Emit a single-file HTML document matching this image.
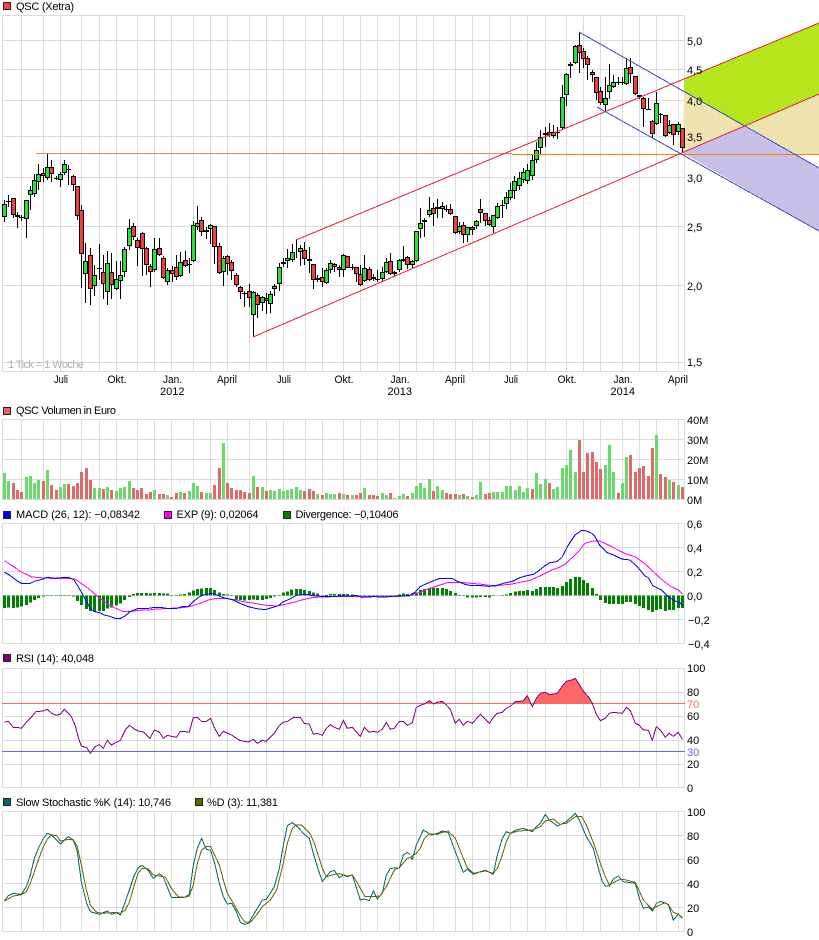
<!DOCTYPE html>
<html><head><meta charset="utf-8"><title>QSC (Xetra)</title>
<style>
html,body{margin:0;padding:0;background:#fff;width:819px;height:940px;overflow:hidden}
svg{display:block}
text{font-family:"Liberation Sans",sans-serif;font-size:11px;fill:#000}
</style></head><body>
<svg xmlns="http://www.w3.org/2000/svg" width="819" height="940" viewBox="0 0 819 940">
<g shape-rendering="crispEdges">
<rect width="819" height="940" fill="#fff"/>
<!-- vertical grid -->
<path fill="none" stroke="#dcdcdc" d="M2.5 15V931M21.5 15V931M43.5 15V931M60.5 15V931M81.5 15V931M99.5 15V931M116.5 15V931M137.5 15V931M154.5 15V931M171.5 15V931M193.5 15V931M210.5 15V931M227.5 15V931M249.5 15V931M266.5 15V931M283.5 15V931M305.5 15V931M322.5 15V931M343.5 15V931M360.5 15V931M377.5 15V931M399.5 15V931M416.5 15V931M433.5 15V931M455.5 15V931M472.5 15V931M489.5 15V931M510.5 15V931M527.5 15V931M545.5 15V931M566.5 15V931M583.5 15V931M600.5 15V931M622.5 15V931M639.5 15V931M656.5 15V931M678.5 15V931M684.5 15V931"/>
<rect x="0" y="372" width="700" height="47" fill="#fff"/>
<rect x="0" y="500" width="700" height="23" fill="#fff"/>
<rect x="0" y="644" width="700" height="24" fill="#fff"/>
<rect x="0" y="788" width="700" height="23" fill="#fff"/>
<!-- horizontal grid -->
<path fill="none" stroke="#dcdcdc" d="M2 15.5H685M2 40.5H685M2 69.5H685M2 100.5H685M2 136.5H685M2 177.5H685M2 226.5H685M2 285.5H685M2 362.5H685M2 371.5H685M2 419.5H685M2 439.5H685M2 459.5H685M2 479.5H685M2 499.5H685M2 523.5H685M2 547.5H685M2 571.5H685M2 595.5H685M2 619.5H685M2 643.5H685M2 668.5H685M2 692.5H685M2 716.5H685M2 740.5H685M2 764.5H685M2 787.5H685M2 811.5H685M2 835.5H685M2 859.5H685M2 883.5H685M2 907.5H685M2 931.5H685"/>
<!-- right fans -->
<polygon fill="#efe4b0" points="684,91 743,126 819,94 819,154 793,154 743,126 683,153"/>
<polygon fill="#c8bfe7" points="683,153 743,126 819,168 819,231"/>
<polygon fill="#b5e61d" points="684,79 819,23 819,94 743,126 684,91"/>
<!-- candle wicks -->
<path fill="none" stroke="#000" d="M4.5 200V222M8.5 195V207M13.5 198V218M17.5 212V228M21.5 215V221M26.5 200V238M30.5 186V210M34.5 174V197M38.5 164V190M43.5 168V182M47.5 154V180M51.5 160V182M56.5 176V180M60.5 172V187M64.5 160V175M68.5 165V185M73.5 175V191M77.5 186V220M81.5 205V288M85.5 243V303M90.5 248V305M94.5 265V296M99.5 244V280M103.5 255V299M107.5 251V305M111.5 253V299M116.5 261V290M120.5 261V299M124.5 247V277M129.5 219V250M133.5 223V240M137.5 238V266M142.5 232V276M146.5 247V275M150.5 264V287M154.5 238V272M159.5 238V256M163.5 256V279M167.5 268V285M172.5 266V282M176.5 255V280M180.5 252V277M185.5 251V267M189.5 258V273M193.5 221V262M197.5 206V230M201.5 217V236M206.5 227V239M210.5 224V244M214.5 226V264M219.5 243V274M223.5 256V286M227.5 255V275M231.5 260V280M236.5 273V287M240.5 286V299M244.5 291V307M249.5 284V307M253.5 291V337M257.5 293V318M262.5 296V311M266.5 293V314M270.5 291V313M274.5 284V296M279.5 263V291M283.5 258V267M287.5 249V268M292.5 244V262M296.5 240V258M300.5 245V266M304.5 242V265M309.5 247V273M313.5 264V289M317.5 275V282M322.5 268V287M326.5 268V284M330.5 260V273M334.5 263V272M339.5 265V277M343.5 254V277M347.5 256V268M352.5 264V270M356.5 267V282M360.5 265V286M364.5 255V282M369.5 267V281M373.5 274V281M377.5 270V282M382.5 267V281M386.5 258V273M390.5 253V275M394.5 271V276M399.5 259V272M403.5 246V262M407.5 256V269M412.5 260V268M416.5 231V262M420.5 208V238M424.5 218V237M429.5 197V217M433.5 203V226M437.5 199V218M442.5 202V218M446.5 205V212M450.5 204V215M455.5 216V234M459.5 222V234M463.5 222V243M467.5 227V242M472.5 226V235M476.5 220V229M480.5 199V223M485.5 213V226M489.5 217V226M493.5 215V233M497.5 203V219M502.5 200V218M506.5 192V209M510.5 183V200M514.5 176V199M519.5 172V190M523.5 168V183M527.5 164V184M532.5 155V180M536.5 142V163M540.5 130V155M545.5 127V147M549.5 123V137M553.5 125V138M557.5 127V139M562.5 85V130M566.5 73V106M570.5 62V78M575.5 45V64M579.5 32V73M583.5 48V68M587.5 56V80M592.5 70V82M596.5 77V100M600.5 87V105M605.5 77V112M609.5 64V99M613.5 75V88M618.5 77V85M622.5 77V85M626.5 58V85M630.5 58V83M635.5 76V95M639.5 95V99M643.5 97V127M648.5 98V110M652.5 120V138M656.5 92V125M660.5 113V123M665.5 115V137M669.5 120V134M673.5 124V145M678.5 122V135M682.5 128V153
M6 201.5h5M19 217.5h5M54 178.5h5M66 169.5h5M97 268.5h5M242 293.5h5M187 264.5h5M350 267.5h5M375 279.5h5M444 209.5h5M500 205.5h5M555 132.5h5M616 82.5h5M620 82.5h5M646 109.5h5M658 114.5h5"/>
<!-- green bodies -->
<path fill="#22e632" stroke="#000" d="M2.5 204.5h4V216.5h-4zM24.5 200.5h4V218.5h-4zM28.5 190.5h4V194.5h-4zM32.5 180.5h4V193.5h-4zM36.5 174.5h4V181.5h-4zM45.5 167.5h4V177.5h-4zM58.5 174.5h4V179.5h-4zM62.5 164.5h4V172.5h-4zM83.5 261.5h4V273.5h-4zM92.5 275.5h4V285.5h-4zM105.5 263.5h4V291.5h-4zM114.5 279.5h4V288.5h-4zM118.5 275.5h4V280.5h-4zM122.5 249.5h4V271.5h-4zM127.5 228.5h4V245.5h-4zM152.5 249.5h4V269.5h-4zM165.5 270.5h4V281.5h-4zM178.5 262.5h4V275.5h-4zM191.5 225.5h4V260.5h-4zM195.5 223.5h4V226.5h-4zM208.5 225.5h4V228.5h-4zM221.5 258.5h4V271.5h-4zM251.5 292.5h4V314.5h-4zM260.5 297.5h4V302.5h-4zM268.5 294.5h4V303.5h-4zM272.5 286.5h4V288.5h-4zM277.5 267.5h4V283.5h-4zM281.5 262.5h4V263.5h-4zM285.5 258.5h4V260.5h-4zM290.5 252.5h4V259.5h-4zM298.5 248.5h4V251.5h-4zM315.5 278.5h4V279.5h-4zM324.5 270.5h4V282.5h-4zM328.5 263.5h4V269.5h-4zM341.5 255.5h4V269.5h-4zM362.5 268.5h4V280.5h-4zM380.5 272.5h4V278.5h-4zM384.5 262.5h4V271.5h-4zM392.5 272.5h4V273.5h-4zM397.5 260.5h4V269.5h-4zM401.5 259.5h4V260.5h-4zM410.5 261.5h4V264.5h-4zM414.5 231.5h4V260.5h-4zM418.5 223.5h4V228.5h-4zM422.5 220.5h4V221.5h-4zM427.5 210.5h4V214.5h-4zM435.5 207.5h4V208.5h-4zM440.5 206.5h4V208.5h-4zM457.5 226.5h4V231.5h-4zM465.5 227.5h4V234.5h-4zM474.5 221.5h4V225.5h-4zM491.5 215.5h4V226.5h-4zM495.5 206.5h4V217.5h-4zM504.5 197.5h4V203.5h-4zM508.5 190.5h4V197.5h-4zM512.5 181.5h4V190.5h-4zM517.5 178.5h4V185.5h-4zM521.5 172.5h4V179.5h-4zM525.5 170.5h4V180.5h-4zM530.5 160.5h4V175.5h-4zM534.5 150.5h4V159.5h-4zM538.5 137.5h4V147.5h-4zM543.5 133.5h4V134.5h-4zM551.5 132.5h4V135.5h-4zM560.5 97.5h4V127.5h-4zM564.5 74.5h4V94.5h-4zM568.5 64.5h4V65.5h-4zM573.5 46.5h4V62.5h-4zM603.5 98.5h4V104.5h-4zM607.5 85.5h4V91.5h-4zM611.5 82.5h4V86.5h-4zM624.5 68.5h4V83.5h-4zM654.5 103.5h4V123.5h-4zM667.5 125.5h4V132.5h-4zM676.5 124.5h4V131.5h-4z"/>
<!-- red bodies -->
<path fill="#f63c3c" stroke="#000" d="M11.5 198.5h4V214.5h-4zM15.5 215.5h4V216.5h-4zM41.5 173.5h4V175.5h-4zM49.5 167.5h4V173.5h-4zM71.5 176.5h4V184.5h-4zM75.5 186.5h4V215.5h-4zM79.5 210.5h4V253.5h-4zM88.5 255.5h4V288.5h-4zM101.5 272.5h4V283.5h-4zM109.5 272.5h4V284.5h-4zM131.5 226.5h4V236.5h-4zM135.5 240.5h4V247.5h-4zM140.5 233.5h4V248.5h-4zM144.5 248.5h4V264.5h-4zM148.5 266.5h4V271.5h-4zM157.5 248.5h4V254.5h-4zM161.5 258.5h4V277.5h-4zM170.5 270.5h4V273.5h-4zM174.5 267.5h4V276.5h-4zM183.5 260.5h4V265.5h-4zM199.5 220.5h4V231.5h-4zM204.5 230.5h4V231.5h-4zM212.5 226.5h4V246.5h-4zM217.5 246.5h4V272.5h-4zM225.5 256.5h4V263.5h-4zM229.5 262.5h4V270.5h-4zM234.5 275.5h4V284.5h-4zM238.5 287.5h4V291.5h-4zM247.5 291.5h4V297.5h-4zM255.5 295.5h4V304.5h-4zM264.5 298.5h4V300.5h-4zM302.5 250.5h4V258.5h-4zM307.5 259.5h4V260.5h-4zM311.5 264.5h4V279.5h-4zM320.5 277.5h4V281.5h-4zM332.5 264.5h4V266.5h-4zM337.5 267.5h4V269.5h-4zM345.5 256.5h4V267.5h-4zM354.5 267.5h4V273.5h-4zM358.5 274.5h4V284.5h-4zM367.5 269.5h4V279.5h-4zM371.5 277.5h4V278.5h-4zM388.5 261.5h4V273.5h-4zM405.5 257.5h4V264.5h-4zM431.5 208.5h4V213.5h-4zM448.5 209.5h4V213.5h-4zM453.5 216.5h4V232.5h-4zM461.5 225.5h4V234.5h-4zM470.5 227.5h4V229.5h-4zM478.5 209.5h4V212.5h-4zM483.5 213.5h4V220.5h-4zM487.5 220.5h4V224.5h-4zM547.5 132.5h4V134.5h-4zM577.5 45.5h4V52.5h-4zM581.5 51.5h4V58.5h-4zM585.5 58.5h4V64.5h-4zM590.5 72.5h4V74.5h-4zM594.5 77.5h4V92.5h-4zM598.5 91.5h4V102.5h-4zM628.5 67.5h4V73.5h-4zM633.5 76.5h4V93.5h-4zM637.5 95.5h4V96.5h-4zM641.5 98.5h4V108.5h-4zM650.5 121.5h4V133.5h-4zM663.5 115.5h4V135.5h-4zM671.5 124.5h4V134.5h-4zM680.5 128.5h4V147.5h-4z"/>
<!-- overlay lines -->
<path fill="none" stroke="#e08a4c" d="M36 153.5H512"/>
<path fill="none" stroke="#ff8000" d="M512 154.5H819"/>
<path fill="none" stroke="#ee1c3c" d="M296 240L819 23M253 337L819 94"/>
<path fill="none" stroke="#3c4cc8" d="M579 32L819 168M597 107L819 231"/>
<!-- volume -->
<path fill="none" stroke="#6ad86a" stroke-width="3" d="M4.5 473V499M8.5 481V499M26.5 477V499M30.5 476V499M34.5 483V499M38.5 480V499M47.5 470V499M60.5 487V499M64.5 484V499M94.5 488V499M99.5 488V499M107.5 487V499M116.5 491V499M120.5 488V499M124.5 487V499M129.5 481V499M154.5 490V499M167.5 495V499M180.5 492V499M189.5 491V499M193.5 483V499M197.5 486V499M206.5 493V499M210.5 493V499M223.5 443V499M253.5 476V499M262.5 487V499M270.5 490V499M274.5 491V499M279.5 489V499M283.5 491V499M287.5 490V499M291.5 489V499M296.5 487V499M300.5 490V499M317.5 494V499M326.5 493V499M330.5 494V499M334.5 494V499M343.5 494V499M352.5 495V499M364.5 488V499M382.5 493V499M386.5 495V499M394.5 498V499M399.5 496V499M403.5 494V499M412.5 493V499M416.5 486V499M420.5 483V499M424.5 488V499M429.5 479V499M437.5 486V499M442.5 490V499M459.5 495V499M467.5 496V499M476.5 495V499M480.5 482V499M493.5 492V499M497.5 492V499M502.5 492V499M506.5 486V499M510.5 486V499M515.5 490V499M519.5 486V499M523.5 492V499M527.5 488V499M536.5 473V499M540.5 484V499M545.5 479V499M553.5 489V499M557.5 487V499M562.5 468V499M566.5 465V499M570.5 450V499M575.5 472V499M605.5 465V499M609.5 445V499M613.5 472V499M622.5 483V499M626.5 457V499M656.5 435V499M669.5 480V499M678.5 485V499"/>
<path fill="none" stroke="#e06a6a" stroke-width="3" d="M13.5 483V499M17.5 490V499M21.5 492V499M43.5 481V499M51.5 485V499M56.5 490V499M68.5 484V499M73.5 486V499M77.5 483V499M81.5 472V499M86.5 468V499M90.5 480V499M103.5 489V499M111.5 490V499M133.5 488V499M137.5 490V499M141.5 488V499M146.5 494V499M150.5 492V499M159.5 494V499M163.5 494V499M171.5 497V499M176.5 493V499M184.5 493V499M201.5 492V499M214.5 485V499M219.5 468V499M227.5 483V499M231.5 488V499M236.5 490V499M240.5 490V499M244.5 492V499M249.5 493V499M257.5 487V499M266.5 491V499M304.5 491V499M309.5 489V499M313.5 491V499M322.5 495V499M339.5 493V499M347.5 495V499M356.5 495V499M360.5 493V499M369.5 495V499M373.5 495V499M377.5 496V499M390.5 493V499M407.5 496V499M433.5 491V499M446.5 493V499M450.5 494V499M455.5 494V499M463.5 494V499M472.5 497V499M485.5 494V499M489.5 493V499M532.5 489V499M549.5 483V499M579.5 440V499M583.5 472V499M587.5 453V499M592.5 452V499M596.5 462V499M600.5 469V499M618.5 493V499M630.5 455V499M635.5 472V499M639.5 468V499M643.5 466V499M648.5 476V499M652.5 448V499M660.5 474V499M665.5 477V499M673.5 482V499M682.5 487V499"/>
<!-- MACD left -->
<g transform="translate(0,505) scale(.33333)" fill="none">
<path stroke="#008000" stroke-width="9" d="M13 271V309M25 271V307M40 271V309M52 271V307M64 271V305M79 271V300M91 271V293M103 271V285M115 271V279M130 271V274M142 271V273M154 271V273M169 271V273M181 271V273M193 271V273M205 271V273M220 271V274M232 271V288M245 271V300M259 271V312M271 271V318M283 271V320M298 271V318M310 271V318M322 271V310M334 271V308M349 271V302M361 271V295M373 271V285M388 271V276M400 267V271M412 264V271M424 264V271M439 264V271M451 265V271M463 264V271M478 264V271M490 266V271M502 266V271M514 270V272M529 270V272M541 268V271M553 267V271M568 263V271M580 257V271M592 252V271M604 250V271M619 249V271M631 249V271M643 255V271M658 263V271M670 267V271M682 269V271M694 270V272M709 271V283M721 271V285M733 271V287M748 271V285M760 271V284M772 271V285M787 271V285M799 271V282M811 271V279M823 271V274M838 270V272M850 262V271M862 260V271M874 254V271M889 252V271M901 252V271M913 255V271M928 258V271M940 262V271M952 266V271M967 270V272M979 270V273M991 267V271M1003 267V271M1018 267V271M1030 267V271M1042 267V271M1057 268V271M1069 270V272M1081 271V273M1093 271V273M1108 271V273M1120 271V273M1132 271V273M1147 271V273M1159 271V273M1171 271V273M1183 271V273M1198 268V271M1210 265V271M1222 267V271"/>
<polyline stroke="#ff00ff" stroke-width="3" points="13,167 30,178 45,188 60,199 75,206 95,216 120,218 150,220 200,220 225,222 245,236 265,250 285,268 305,284 325,298 345,309 370,320 390,320 415,316 445,315 470,312 510,310 550,308 575,303 600,295 625,285 645,281 680,281 705,284 730,290 770,296 800,301 830,303 855,298 885,291 905,285 935,278 965,276 1000,275 1050,274 1100,275 1160,275 1230,273"/>
<polyline stroke="#0000ff" stroke-width="3" points="13,202 25,208 40,219 52,228 64,235 91,235 103,229 115,226 130,222 142,217 165,220 185,218 208,218 222,225 235,245 250,272 260,290 271,311 283,320 300,323 312,330 330,334 345,340 360,341 375,333 390,320 400,316 415,310 440,311 463,307 480,307 500,310 530,310 545,305 565,305 580,290 595,277 610,270 635,265 650,270 670,278 700,285 720,295 745,305 770,311 795,314 815,308 835,302 850,290 870,282 890,270 920,268 945,273 985,275 1030,273 1070,272 1085,277 1120,275 1160,276 1185,273 1230,272"/>
</g>
<!-- MACD right -->
<g transform="translate(410,505) scale(.33333)" fill="none">
<path stroke="#008000" stroke-width="9" d="M7 265V271M19 262V271M31 255V271M43 252V271M58 249V271M70 249V271M82 249V271M97 249V271M109 252V271M121 258V271M136 264V271M148 270V272M160 271V273M172 271V278M187 271V278M199 271V278M211 271V276M226 271V276M238 271V278M250 271V273M262 271V272M277 270V272M289 268V271M301 264V271M316 260V271M328 258V271M340 258V271M352 255V271M367 258V271M379 252V271M391 246V271M406 246V271M418 246V271M430 246V271M442 249V271M457 243V271M469 231V271M481 222V271M496 216V271M508 216V271M520 225V271M532 234V271M547 249V271M559 267V271M571 271V285M586 271V294M598 271V297M610 271V297M625 271V297M637 271V297M649 271V291M661 271V291M676 271V297M688 271V303M700 271V309M715 271V315M727 271V321M739 271V315M751 271V312M766 271V318M778 271V315M790 271V315M805 271V309M817 271V309"/>
<polyline stroke="#ff00ff" stroke-width="3" points="0,270 30,262 60,250 90,240 115,232 150,232 185,235 215,238 240,241 265,241 300,238 330,232 360,226 385,215 405,205 425,195 445,188 465,178 490,155 505,140 525,115 550,108 570,108 595,120 620,133 645,146 675,155 710,180 730,200 755,223 780,243 805,255 818,267"/>
<polyline stroke="#0000ff" stroke-width="3" points="0,270 15,262 30,245 45,238 60,232 75,225 90,220 125,220 140,228 165,238 185,242 215,242 235,244 255,243 280,235 310,228 330,218 350,212 370,208 385,198 405,182 420,173 440,170 455,158 475,120 495,90 515,76 530,78 545,85 555,95 570,122 590,142 615,152 635,162 660,165 680,183 705,213 715,218 728,242 755,255 775,275 795,288 810,293 818,303"/>
</g>
<!-- RSI -->
<g transform="translate(410,650) scale(.33333)">
<polygon fill="#ff6666" points="305,160 316,155 331,154 340,152 352,137 362,160"/>
<polygon fill="#ff6666" points="373,160 379,145 391,130 406,127 418,134 442,130 457,108 469,94 485,90 496,85 508,103 520,124 535,140 545,160"/>
<polygon fill="#ff6666" points="50,160 58,152 66,160"/>
<polygon fill="#ff6666" points="85,160 97,154 105,160"/>
</g>
<path fill="none" stroke="#ff6666" d="M2 703.5H685"/>
<path fill="none" stroke="#6666ff" d="M2 751.5H685"/>
<g transform="translate(0,650) scale(.33333)" fill="none" stroke="#800080" stroke-width="3">
<polyline points="13,216 25,214 40,232 52,232 64,235 79,217 91,205 108,185 130,183 142,178 155,190 170,196 181,193 193,178 205,190 214,200 225,225 235,262 244,288 260,293 271,310 285,290 298,284 310,295 322,271 334,285 349,277 361,271 376,240 388,226 403,237 415,243 430,246 450,265 463,240 478,246 490,265 502,256 514,259 529,262 541,244 568,246 580,202 592,202 605,214 619,214 632,205 644,235 658,259 670,244 682,250 695,255 709,265 721,272 745,276 760,268 772,280 787,271 799,274 823,250 838,226 850,217 862,214 880,203 901,202 913,220 928,223 940,253 952,250 967,256 979,235 991,224 1003,232 1018,238 1030,211 1042,235 1057,232 1081,259 1093,232 1108,247 1120,244 1132,247 1147,237 1159,217 1171,238 1183,235 1198,214 1210,214 1222,226 1230,222"/>
</g>
<g transform="translate(410,650) scale(.33333)" fill="none" stroke="#800080" stroke-width="3">
<polyline points="0,222 7,218 19,172 31,166 43,162 58,152 70,162 82,157 97,154 109,165 121,178 136,220 148,208 160,226 172,214 187,220 211,193 238,220 250,202 262,190 277,187 289,175 301,169 316,155 331,154 340,152 352,137 367,170 379,145 391,130 406,127 418,134 442,130 457,108 469,94 485,90 496,85 508,103 520,124 535,140 547,160 559,193 571,212 586,205 598,190 610,187 637,190 649,172 661,182 676,220 688,226 700,240 715,241 727,271 739,230 751,240 766,262 778,250 790,259 805,247 817,268"/>
</g>
<!-- Stochastic -->
<g transform="translate(0,795) scale(.33333)" fill="none" stroke-width="3">
<polyline stroke="#006666" points="13,318 25,302 40,295 64,298 79,275 91,240 103,190 115,160 130,130 142,115 155,120 181,147 193,135 205,125 220,135 232,170 244,260 260,325 271,350 298,358 322,348 334,358 349,353 361,360 376,320 388,285 403,240 415,218 427,211 445,227 460,250 478,236 490,246 514,307 553,307 568,298 580,210 592,160 605,130 619,163 632,166 644,205 658,265 670,305 682,327 695,325 709,350 721,382 733,388 745,385 760,360 787,315 799,313 823,275 838,220 850,150 862,92 877,83 889,92 913,118 928,130 940,175 955,225 967,260 979,245 991,230 1003,226 1018,248 1030,240 1042,245 1057,240 1081,315 1093,312 1108,317 1120,288 1132,312 1147,295 1159,240 1171,220 1198,219 1210,180 1222,172 1230,178"/>
<polyline stroke="#666600" points="13,318 40,303 64,299 79,290 91,265 115,195 130,155 142,133 155,120 170,122 181,138 205,133 220,135 232,155 244,210 258,280 271,330 290,352 310,355 349,352 361,355 376,345 388,322 403,270 415,233 427,220 445,222 460,240 478,243 497,247 514,280 535,305 553,307 568,303 580,270 592,205 605,165 619,155 632,155 658,210 670,255 682,295 700,325 721,362 733,380 750,383 770,360 787,335 811,315 830,285 850,205 862,145 877,100 889,90 905,90 930,115 945,150 967,220 979,245 1003,238 1018,236 1042,243 1057,240 1070,260 1095,305 1120,305 1140,303 1159,275 1183,225 1198,218 1222,190 1230,187"/>
</g>
<g transform="translate(410,795) scale(.33333)" fill="none" stroke-width="3">
<polyline stroke="#006666" points="0,185 7,193 19,150 40,105 64,120 82,115 97,108 115,113 136,170 160,232 172,222 190,238 211,230 226,226 250,238 262,180 277,130 289,110 301,115 316,106 340,100 367,110 379,95 391,85 406,58 418,75 442,93 469,80 496,55 508,75 529,125 550,160 565,220 577,260 586,273 598,273 610,252 625,243 640,260 676,265 688,310 700,340 715,336 727,348 739,325 751,319 775,328 790,375 805,357 817,370"/>
<polyline stroke="#666600" points="0,187 19,175 31,160 43,130 58,117 82,118 97,112 115,108 136,130 160,190 172,218 190,235 226,228 250,235 262,220 277,180 289,140 301,115 325,108 367,105 391,95 406,78 430,72 450,88 469,85 496,65 515,65 529,90 553,150 571,205 586,245 598,270 625,255 640,253 676,262 700,315 727,343 739,335 765,323 775,330 790,352 805,358 817,368"/>
</g>
<!-- legend squares -->
<g stroke="#222">
<rect x="3.5" y="2.5" width="7" height="7" fill="#ff4040"/>
<rect x="3.5" y="407.5" width="7" height="7" fill="#e06666"/>
<rect x="3.5" y="511.5" width="7" height="7" fill="#0000ff"/>
<rect x="164.5" y="511.5" width="7" height="7" fill="#ff00ff"/>
<rect x="283.5" y="511.5" width="7" height="7" fill="#008000"/>
<rect x="3.5" y="654.5" width="7" height="7" fill="#800080"/>
<rect x="3.5" y="798.5" width="7" height="7" fill="#006666"/>
<rect x="195.5" y="798.5" width="7" height="7" fill="#666600"/>
</g>
</g>
<!-- legend text -->
<text x="16" y="10" textLength="58" lengthAdjust="spacing">QSC (Xetra)</text>
<text x="16" y="414" textLength="100" lengthAdjust="spacing">QSC Volumen in Euro</text>
<text x="16" y="518" textLength="124" lengthAdjust="spacing">MACD (26, 12): −0,08342</text>
<text x="176.5" y="518" textLength="82" lengthAdjust="spacing">EXP (9): 0,02064</text>
<text x="295.5" y="518" textLength="103" lengthAdjust="spacing">Divergence: −0,10406</text>
<text x="16" y="662" textLength="78" lengthAdjust="spacing">RSI (14): 40,048</text>
<text x="16" y="806" textLength="155" lengthAdjust="spacing">Slow Stochastic %K (14): 10,746</text>
<text x="207" y="806" textLength="71" lengthAdjust="spacing">%D (3): 11,381</text>
<text x="8" y="368" textLength="76" lengthAdjust="spacing" style="fill:#b0b0b0">1 Tick = 1 Woche</text>
<!-- x axis -->
<g>
<text x="54" y="383" textLength="14" lengthAdjust="spacingAndGlyphs">Juli</text><text x="107.5" y="383" textLength="19" lengthAdjust="spacingAndGlyphs">Okt.</text><text x="163" y="383" textLength="19" lengthAdjust="spacingAndGlyphs">Jan.</text><text x="160" y="395">2012</text><text x="217" y="383" textLength="20" lengthAdjust="spacingAndGlyphs">April</text>
<text x="277" y="383" textLength="14" lengthAdjust="spacingAndGlyphs">Juli</text><text x="334.5" y="383" textLength="19" lengthAdjust="spacingAndGlyphs">Okt.</text><text x="390.5" y="383" textLength="19" lengthAdjust="spacingAndGlyphs">Jan.</text><text x="387.5" y="395">2013</text><text x="445" y="383" textLength="20" lengthAdjust="spacingAndGlyphs">April</text>
<text x="504" y="383" textLength="14" lengthAdjust="spacingAndGlyphs">Juli</text><text x="557.5" y="383" textLength="19" lengthAdjust="spacingAndGlyphs">Okt.</text><text x="613.5" y="383" textLength="19" lengthAdjust="spacingAndGlyphs">Jan.</text><text x="610.5" y="395">2014</text><text x="668" y="383" textLength="20" lengthAdjust="spacingAndGlyphs">April</text>
</g>
<!-- y axes -->
<g>
<text x="687" y="45">5,0</text><text x="687" y="74">4,5</text><text x="687" y="105">4,0</text><text x="687" y="141">3,5</text><text x="687" y="182">3,0</text><text x="687" y="231">2,5</text><text x="687" y="290">2,0</text><text x="687" y="366">1,5</text>
<text x="687" y="424">40M</text><text x="687" y="444">30M</text><text x="687" y="464">20M</text><text x="687" y="484">10M</text><text x="687" y="504">0M</text>
<text x="687" y="528">0,6</text><text x="687" y="552">0,4</text><text x="687" y="576">0,2</text><text x="687" y="600">0,0</text><text x="688" y="624">−0,2</text><text x="688" y="648">−0,4</text>
<text x="687" y="672">100</text><text x="687" y="696">80</text><text x="687" y="708" style="fill:#ff6666">70</text><text x="687" y="720">60</text><text x="687" y="744">40</text><text x="687" y="756" style="fill:#6666ff">30</text><text x="687" y="768">20</text><text x="687" y="792">0</text>
<text x="687" y="816">100</text><text x="687" y="840">80</text><text x="687" y="864">60</text><text x="687" y="888">40</text><text x="687" y="912">20</text><text x="687" y="936">0</text>
</g>
</svg>
</body></html>
